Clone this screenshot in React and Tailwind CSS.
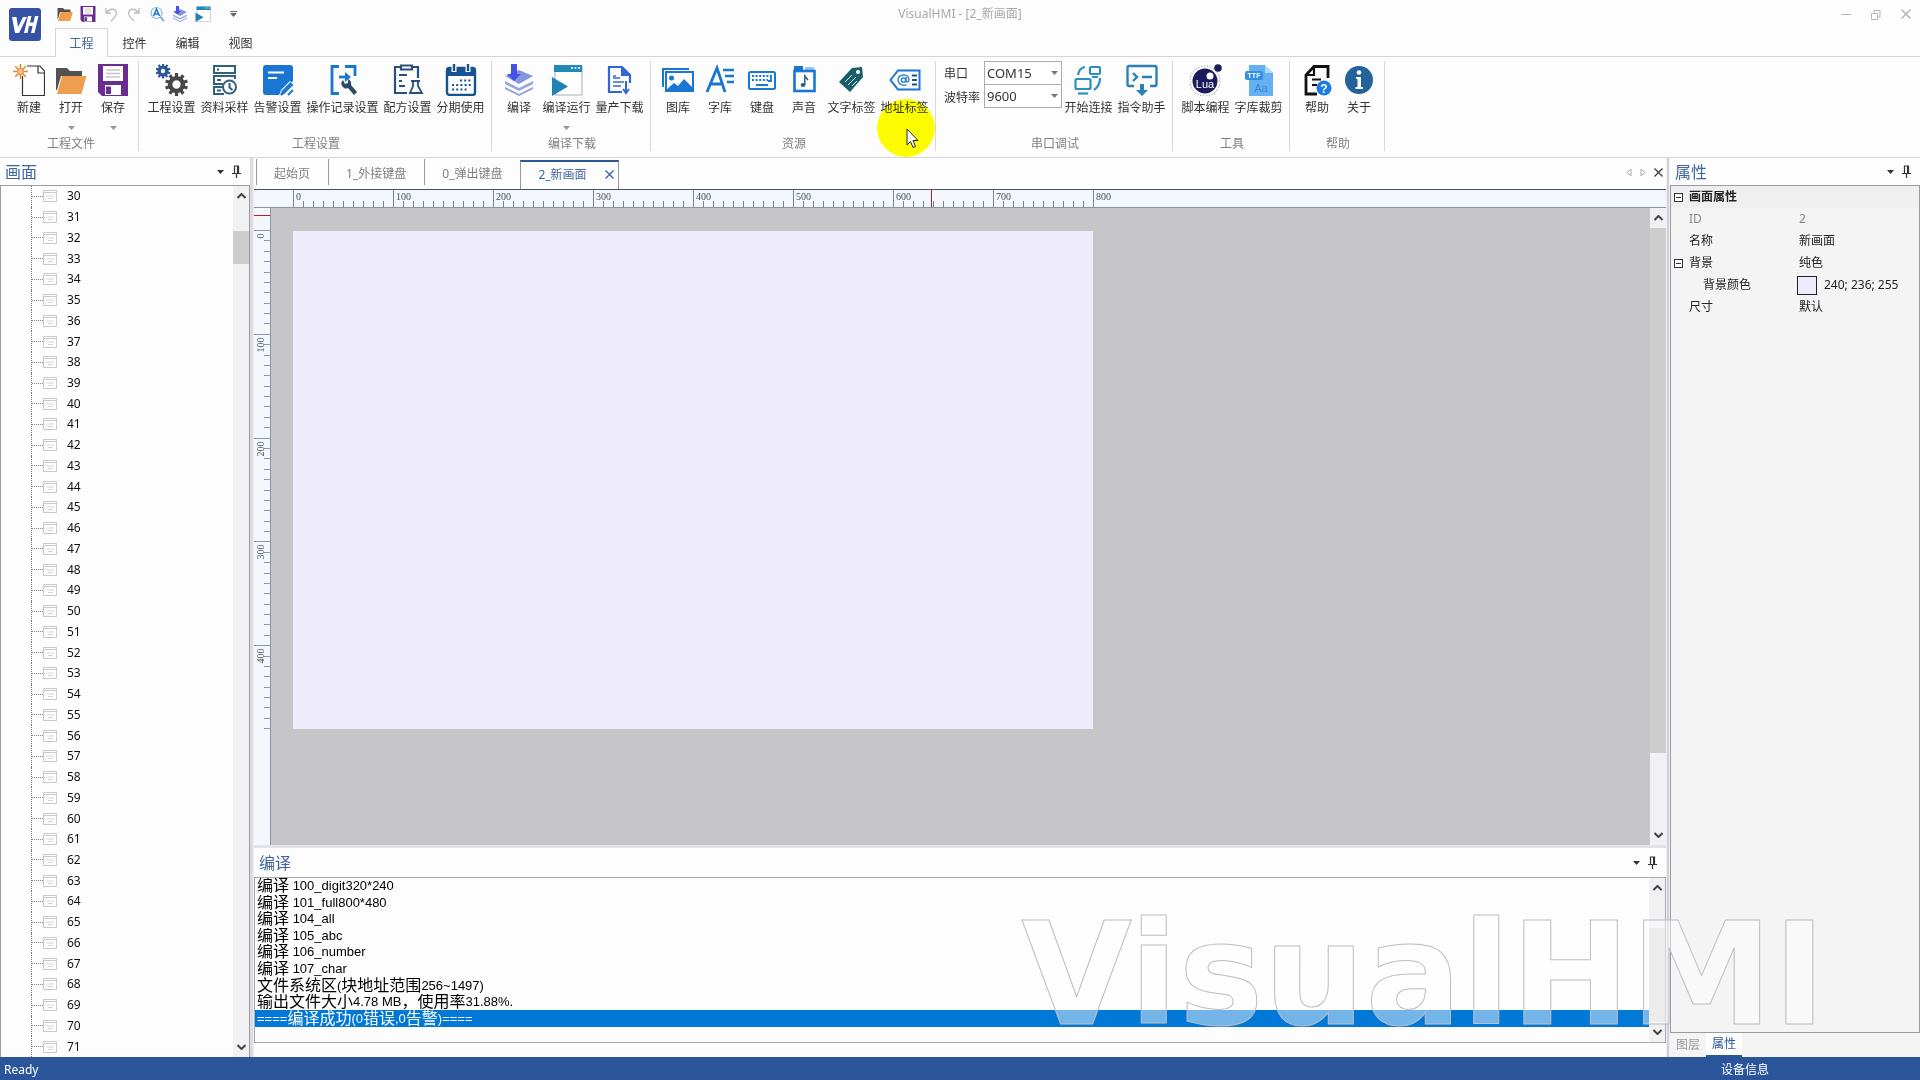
import React, { useState } from 'react';

const BLUE = '#1976d2';
const NAVY = '#2b4f7d';

/* ---------- toolbar drawings ---------- */

function Svg({ children, size = 32, box = 32 }) {
  return (
    <svg width={size} height={size} viewBox={`0 0 ${box} ${box}`} fill="none" aria-hidden="true">
      {children}
    </svg>
  );
}

const NewIcon = () => (
  <Svg>
    <path d="M14 2H27L31.500 7V31.500H9.500V12" fill="#fff" stroke="#333" strokeWidth="1.200" />
    <path d="M25 2V9H31.500" stroke="#333" strokeWidth="1.200" />
    <g stroke="#dc8a35" strokeWidth="1.600">
      <path d="M7.500 0V15M0 7.500H15M2.200 2.200L12.800 12.800M12.800 2.200L2.200 12.800" />
    </g>
    <circle cx="7.500" cy="7.500" r="3" fill="#f6c188" stroke="#dc8a35" />
  </Svg>
);

const OpenIcon = ({ size }) => (
  <Svg size={size}>
    <path d="M1 4H12L15 7H27V12H6L2 26H1Z" fill="#555150" />
    <path d="M7 12H31.500L26.500 30H2Z" fill="#ef9d4f" />
  </Svg>
);

const SaveIcon = ({ size }) => (
  <Svg size={size}>
    <path d="M1 0H31V32H5L1 28Z" fill="#6b2c91" />
    <path d="M6 2H26V17H6Z" fill="#fff" />
    <path d="M8 21H24V31H8Z" fill="#fff" />
    <path d="M9 6H23M9 9.500H23M9 13H23" stroke="#c4c4cc" strokeWidth="1.400" />
    <path d="M9 22.500H14V30H9Z" fill="#6b2c91" />
  </Svg>
);

function Gear({ cx, cy, r, color, hole }) {
  const teeth = [0, 36, 72, 108, 144, 180, 216, 252, 288, 324];
  return (
    <g transform={`translate(${cx} ${cy})`}>
      {teeth.map(a => (
        <rect key={a} x={-r * 0.14} y={-r} width={r * 0.28} height={r * 0.5} fill={color} transform={`rotate(${a})`} />
      ))}
      <circle r={(r * 0.72 + hole) / 2} stroke={color} strokeWidth={r * 0.78 - hole} />
    </g>
  );
}

const GearsIcon = () => (
  <Svg>
    <Gear cx={7} cy={7} r={7.5} color="#2b5797" hole={2.4} />
    <Gear cx={20.500} cy={20.500} r={11.500} color="#474747" hole={4.500} />
  </Svg>
);

const SampleIcon = () => (
  <Svg>
    <g stroke="#33617a" strokeWidth="2">
      <path d="M5 2H26V9H5ZM26 15V12H5V20H14M14 23H5V30H15" />
      <path d="M8 5.500H10M8 16H12M8 26.500H12" />
      <circle cx="20.500" cy="23" r="6.500" />
      <path d="M20.500 19V23.500L23.500 26" />
    </g>
  </Svg>
);

const AlarmIcon = () => (
  <Svg>
    <path d="M4 1H28Q31 1 31 4V17L17 31H4Q1 31 1 28V4Q1 1 4 1Z" fill={BLUE} />
    <path d="M6 8.500H22M6 14H15" stroke="#fff" strokeWidth="2" />
    <path d="M17 32L19 26L28 17L32 21L22 31Z" fill="#fff" />
    <path d="M19 31L21 27L28.500 19.500L30 21L22.500 28.500ZM26 31L31 26" stroke={BLUE} strokeWidth="2" />
  </Svg>
);

const RecordIcon = () => (
  <Svg>
    <g stroke={BLUE} strokeWidth="2.800">
      <path d="M12 2.500H5V29.500H12M18 2.500H28V12" />
      <path d="M12 13H20" />
    </g>
    <path d="M18 8L24 13L18 18Z" fill={BLUE} />
    <path d="M16 16Q12 20 17 24Q19 25 21 24L27 31L30 28L24 21Q25 17 21 15V19L18 20Z" fill="#2c4a63" />
  </Svg>
);

const RecipeIcon = () => (
  <Svg>
    <g stroke={NAVY} strokeWidth="2.200">
      <path d="M9 3H3V29H15M20 3H26V14" />
      <path d="M9 1.500H20V5.500H9Z" />
      <path d="M7 11H15M7 17H10M7 22H13" />
      <path d="M19 17H28M21 17V22L18 29H30L26 22V17" strokeWidth="1.800" />
    </g>
  </Svg>
);

const CalendarIcon = () => (
  <Svg>
    <rect x="2" y="4" width="28" height="27" rx="2.500" fill="#fff" stroke="#17538f" strokeWidth="2.400" />
    <path d="M2 4H30V12H2Z" fill="#17538f" />
    <path d="M9 0V8M23 0V8" stroke="#fff" strokeWidth="5" />
    <path d="M9 0V7M23 0V7" stroke="#17538f" strokeWidth="2.400" />
    <path d="M15 16.500H26M7 21H26M7 25.500H22" stroke="#17538f" strokeWidth="2" strokeDasharray="2 2.200" />
  </Svg>
);

const CompileIcon = ({ size }) => (
  <Svg size={size}>
    <path d="M2 23L16 30L30 23V25L16 32L2 25Z" fill="#8fa0d8" />
    <path d="M2 17L16 24L30 17V20L16 27L2 20Z" fill="#97a8e0" />
    <path d="M2 12L16 6L30 12L16 20Z" fill="#8497dc" />
    <path d="M8 0H14V10H18L11 17L4 10H8Z" fill="#4453e6" />
  </Svg>
);

const RunIcon = ({ size }) => (
  <Svg size={size}>
    <path d="M4 2H31V31H4Z" fill="#fff" stroke="#a9aeb5" />
    <path d="M3 1H31V8H3Z" fill="#2189b8" />
    <path d="M20 4H30" stroke="#fff" strokeWidth="1.500" strokeDasharray="2 1.500" />
    <path d="M1 13L17 22.500L1 32Z" fill="#1f82b5" />
  </Svg>
);

const BatchIcon = () => (
  <Svg>
    <path d="M18 28H5V3H18L26 11V19" stroke="#3465d8" strokeWidth="2.200" />
    <path d="M17 2L27 12H17Z" fill="#3465d8" />
    <path d="M9 14H16M9 18H20M9 22H17M9 12H12" stroke="#3465d8" strokeWidth="1.600" />
    <path d="M22 17V29M19 25L22 29L25 25" stroke="#3465d8" strokeWidth="2" />
  </Svg>
);

const ImageIcon = () => (
  <Svg>
    <path d="M1 23V5H27" stroke={BLUE} strokeWidth="2" />
    <rect x="4" y="8" width="27" height="19" stroke={BLUE} strokeWidth="2" />
    <circle cx="9.500" cy="14" r="2.500" fill={BLUE} />
    <path d="M4 26L12 19L16 22L22 15L30 23V27H4Z" fill={BLUE} />
  </Svg>
);

const FontIcon = () => (
  <Svg>
    <path d="M3 28L13 4L21 28M6.500 20H18" stroke={BLUE} strokeWidth="2.800" />
    <path d="M19 6H30M21 12H30M23 18H30" stroke={BLUE} strokeWidth="2.600" />
  </Svg>
);

const KeyboardIcon = () => (
  <Svg>
    <rect x="3" y="8" width="26" height="17" rx="1.500" stroke={BLUE} strokeWidth="2" />
    <path d="M6 12H26M6 16H22M10 21H22" stroke={BLUE} strokeWidth="1.800" strokeDasharray="2 1.600" />
    <path d="M11 21H21M25 13V17H22" stroke={BLUE} strokeWidth="1.800" />
  </Svg>
);

const SoundIcon = () => (
  <Svg>
    <path d="M6 2H15V6H6Z" fill={BLUE} />
    <path d="M17 3H26V8H17Z" fill="#9cc4ef" />
    <rect x="6.500" y="7" width="20" height="20" stroke={BLUE} strokeWidth="2.600" />
    <ellipse cx="15" cy="21" rx="2.400" ry="1.900" fill="#33617a" />
    <path d="M16.800 21V12L20 16" stroke="#33617a" strokeWidth="1.500" />
  </Svg>
);

const TagIcon = () => (
  <Svg>
    <path d="M3 18L16 4L26 3L27 13L14 28Z" fill="#175f69" />
    <circle cx="22" cy="8" r="2" fill="#fff" />
    <path d="M9 18L16 11M12 21L20 13M16 22L21 17" stroke="#fff" strokeWidth="0.900" />
  </Svg>
);

const AddressIcon = () => (
  <Svg>
    <path d="M1.500 16L9 6.500H30.500V25.500H9Z" stroke={BLUE} strokeWidth="2" />
    <circle cx="14.500" cy="16" r="2.200" stroke={BLUE} strokeWidth="1.300" />
    <path d="M17 13V17.500Q19.500 19 20 15.500Q19.500 11 14.500 10.800Q9 11.500 9 16Q9.500 21 14.500 21.200H17.500" stroke={BLUE} strokeWidth="1.300" />
    <path d="M23 11.500H28M23 16H28M23 20.500H28" stroke="#175f69" strokeWidth="2" />
  </Svg>
);

const ConnectIcon = () => (
  <Svg>
    <g stroke="#2d8fc0" strokeWidth="2.200">
      <rect x="2.500" y="15" width="15" height="10" rx="1.500" />
      <path d="M5 29.500H15" />
      <rect x="17" y="3" width="10" height="7" rx="1" />
      <path d="M19 13H25M5 11Q6 4 12 3M27 14Q27 22 21 26" />
    </g>
  </Svg>
);

const CommandIcon = () => (
  <Svg>
    <path d="M8 22H3Q1.500 22 1.500 20V4Q1.500 2 3 2H29Q30.500 2 30.500 4V20Q30.500 22 29 22H24" stroke="#2d80b5" strokeWidth="2.400" />
    <path d="M7 9L11 13L7 17M16 13H26" stroke="#2d80b5" strokeWidth="2.400" />
    <path d="M14 20H18V26H22L16 32L10 26H14Z" fill="#2d80b5" />
  </Svg>
);

const LuaIcon = () => (
  <Svg>
    <circle cx="15" cy="17" r="15" stroke="#9a9aa5" strokeWidth="1" strokeDasharray="1.500 1.500" />
    <circle cx="15" cy="17" r="12.500" fill="#1c1c5c" />
    <circle cx="20" cy="12" r="3.500" fill="#fff" />
    <circle cx="28" cy="4" r="3.800" fill="#1c1c5c" />
    <text x="15" y="24" fontSize="11" fill="#fff" textAnchor="middle" fontFamily="Liberation Sans">Lua</text>
  </Svg>
);

const TtfIcon = () => (
  <Svg>
    <path d="M6 1H22L30 9V32H6Z" fill="#64b0f3" />
    <path d="M22 1L30 9H22Z" fill="#b4dbfb" />
    <rect x="2" y="7" width="18" height="9" rx="2" fill="#358fe0" />
    <text x="11" y="14" fontSize="7" fontWeight="700" fill="#fff" textAnchor="middle" fontFamily="Liberation Sans">TTF</text>
    <text x="18" y="28" fontSize="11" fill="#3b87cc" textAnchor="middle" fontFamily="Liberation Sans">Aa</text>
  </Svg>
);

const HelpIcon = () => (
  <Svg>
    <path d="M16 30H5V11L13 2.500H27V14" stroke="#111" strokeWidth="2.800" />
    <path d="M13 3V11H5M11 15.500H20M11 21H16" stroke="#111" strokeWidth="2.200" />
    <circle cx="23" cy="24" r="7.500" fill="#1a7ce0" />
    <text x="23" y="28.500" fontSize="12" fontWeight="700" fill="#fff" textAnchor="middle" fontFamily="Liberation Sans">?</text>
  </Svg>
);

const AboutIcon = () => (
  <Svg>
    <circle cx="16" cy="16" r="14" fill="#24639a" />
    <circle cx="16" cy="8.500" r="2.300" fill="#fff" />
    <path d="M13 13H18V23H20V25H12.500V23H14.500V15H13Z" fill="#fff" />
  </Svg>
);

const UndoIcon = () => (
  <Svg size={16} box={16}>
    <path d="M3 2V7H8M3 7Q8 1 12.500 4.500Q15 8 11 12L8 15" stroke="#bcbcc2" strokeWidth="1.300" />
  </Svg>
);

const RedoIcon = () => (
  <Svg size={16} box={16}>
    <path d="M13 2V7H8M13 7Q8 1 3.500 4.500Q1 8 5 12L8 15" stroke="#bcbcc2" strokeWidth="1.300" />
  </Svg>
);

const FindIcon = () => (
  <Svg size={16} box={16}>
    <circle cx="7.500" cy="7" r="5.500" stroke="#8cbbe6" strokeWidth="1.200" />
    <path d="M4.500 10L7.500 3L10.500 10M5.500 8H9.500" stroke={BLUE} strokeWidth="1.500" />
    <path d="M11.500 11L15 15" stroke="#7da0c0" strokeWidth="1.800" />
  </Svg>
);

/* ---------- small shared parts ---------- */

const Triangle = () => (
  <svg width="7" height="4" viewBox="0 0 7 4" aria-hidden="true"><path d="M0 0H7L3.500 4Z" fill="currentColor" /></svg>
);

const Pin = () => (
  <svg width="9" height="13" viewBox="0 0 9 13" fill="none" aria-hidden="true">
    <path d="M2.500 8V1H6.500V8M0 8.500H9M4.500 9V13" stroke="#333" strokeWidth="1.200" />
    <path d="M5 1H7V8H5Z" fill="#333" />
  </svg>
);

const Cross = ({ size = 9 }) => (
  <svg width={size} height={size} viewBox="0 0 9 9" fill="none" aria-hidden="true">
    <path d="M0.500 0.500L8.500 8.500M8.500 0.500L0.500 8.500" stroke="currentColor" strokeWidth="1.400" />
  </svg>
);

function PanelHeader({ title }) {
  return (
    <div className="flex h-[27px] shrink-0 items-center pl-[5px] pr-[9px]">
      <h2 className="flex-1 text-base leading-5 text-[#40659f]">{title}</h2>
      <button className="mr-2 text-[#333]" aria-label="选项"><Triangle /></button>
      <button aria-label="固定"><Pin /></button>
    </div>
  );
}

function ScrollBar({ top, height, thumb = 'bg-[#cdcdcd]' }) {
  return (
    <div className="flex w-4 shrink-0 flex-col bg-[#f1f1f3] text-[#444]">
      <button className="flex h-5 items-center justify-center" aria-label="向上">
        <svg width="9" height="6" viewBox="0 0 9 6" fill="none"><path d="M0.500 5L4.500 1L8.500 5" stroke="currentColor" strokeWidth="2" /></svg>
      </button>
      <div className="relative flex-1">
        <div className={`absolute inset-x-0 ${thumb}`} style={{ top: `${top}%`, height: `${height}%` }} />
      </div>
      <button className="flex h-5 items-center justify-center" aria-label="向下">
        <svg width="9" height="6" viewBox="0 0 9 6" fill="none"><path d="M0.500 1L4.500 5L8.500 1" stroke="currentColor" strokeWidth="2" /></svg>
      </button>
    </div>
  );
}

/* ---------- title bar ---------- */

const menus = ['工程', '控件', '编辑', '视图'];

function TitleBar() {
  const [menu, setMenu] = useState('工程');

  return (
    <header className="grid shrink-0 grid-cols-[1fr_auto_1fr] border-b border-[#d5d5d8]">
      <div className="flex">
        <div className="w-[55px] shrink-0 pl-[9px] pt-2">
          <svg width="32" height="33" viewBox="0 0 32 33" aria-label="VisualHMI">
            <rect width="32" height="33" rx="3" fill="#3552a4" />
            <path d="M3 9H7.500L9 19L14 9H18L10 25H6Z" fill="#fff" />
            <path d="M19 8H22.500L21 14.500H24.500L26 8H29.500L25.500 25H22L23.600 18H20L18.500 25H15Z" fill="#fff" />
          </svg>
        </div>
        <div>
          <div className="flex h-7 items-center gap-[7px] pl-[2px]">
            <button aria-label="打开"><OpenIcon size={16} /></button>
            <button aria-label="保存"><SaveIcon size={16} /></button>
            <button aria-label="撤销"><UndoIcon /></button>
            <button aria-label="重做"><RedoIcon /></button>
            <button aria-label="查找"><FindIcon /></button>
            <button aria-label="编译"><CompileIcon size={16} /></button>
            <button aria-label="编译运行"><RunIcon size={16} /></button>
            <button className="ml-3 border-t border-[#666] pt-px text-[#666]" aria-label="自定义"><Triangle /></button>
          </div>
          <nav className="-mb-px flex">
            {menus.map(name => (
              <button
                key={name}
                onClick={() => setMenu(name)}
                className={`h-[29px] w-[53px] border border-b-0 pt-[2px] ${
                  menu === name ? 'border-[#d5d5d8] bg-[#fdfdfe] text-[#40659f]' : 'border-transparent'
                }`}
              >
                {name}
              </button>
            ))}
          </nav>
        </div>
      </div>
      <h1 className="pt-[6px] leading-4 text-[#a8a8a8]">VisualHMI - [2_新画面]</h1>
      <div className="flex h-7 items-center justify-end gap-5 pr-[9px] text-[#b5b5b5]">
        <button aria-label="最小化"><span className="block h-px w-[10px] bg-[#b5b5b5]" /></button>
        <button aria-label="还原">
          <svg width="10" height="11" viewBox="0 0 10 11" fill="none"><path d="M0.500 4.500H6.500V10.500H0.500ZM3 4V1.500H9V8H7" stroke="currentColor" /></svg>
        </button>
        <button aria-label="关闭"><Cross size={10} /></button>
      </div>
    </header>
  );
}

/* ---------- ribbon ---------- */

function Tool({ icon, label, menu }) {
  return (
    <button className={`flex flex-col items-center whitespace-nowrap pt-[3px] ${
      label.length > 4 ? 'w-[77px]' : label.length > 2 ? 'w-[53px]' : 'w-[42px]'
    }`}>
      {icon}
      <span className="mt-1 leading-4">{label}</span>
      <span className="mt-1 flex h-4 items-center text-[#999]">{menu && <Triangle />}</span>
    </button>
  );
}

function Group({ title, children }) {
  return (
    <section className="border-r border-[#d8d8dc] pl-[6px] pr-1 first:pl-2">
      <div className="flex">{children}</div>
      <h3 className="mt-px text-center leading-[14px] text-[#808080]">{title}</h3>
    </section>
  );
}

function Combo({ id, options }) {
  return (
    <div className="relative -mt-px flex items-center first:mt-0">
      <select id={id} className="h-6 w-[78px] appearance-none border border-[#ababab] bg-white pl-[2px] text-[13px] leading-4">
        {options.map(o => <option key={o}>{o}</option>)}
      </select>
      <span className="pointer-events-none absolute right-1 text-[#777]"><Triangle /></span>
    </div>
  );
}

function Ribbon() {
  return (
    <div className="relative flex shrink-0 border-b border-[#d5d5d8] pb-[6px] pt-1">
      <Group title="工程文件">
        <Tool icon={<NewIcon />} label="新建" />
        <Tool icon={<OpenIcon />} label="打开" menu />
        <Tool icon={<SaveIcon />} label="保存" menu />
      </Group>
      <Group title="工程设置">
        <Tool icon={<GearsIcon />} label="工程设置" />
        <Tool icon={<SampleIcon />} label="资料采样" />
        <Tool icon={<AlarmIcon />} label="告警设置" />
        <Tool icon={<RecordIcon />} label="操作记录设置" />
        <Tool icon={<RecipeIcon />} label="配方设置" />
        <Tool icon={<CalendarIcon />} label="分期使用" />
      </Group>
      <Group title="编译下载">
        <Tool icon={<CompileIcon />} label="编译" />
        <Tool icon={<RunIcon />} label="编译运行" menu />
        <Tool icon={<BatchIcon />} label="量产下载" />
      </Group>
      <Group title="资源">
        <Tool icon={<ImageIcon />} label="图库" />
        <Tool icon={<FontIcon />} label="字库" />
        <Tool icon={<KeyboardIcon />} label="键盘" />
        <Tool icon={<SoundIcon />} label="声音" />
        <Tool icon={<TagIcon />} label="文字标签" />
        <Tool icon={<AddressIcon />} label="地址标签" />
      </Group>
      <Group title="串口调试">
        <div className="flex flex-col pl-[2px] pt-px">
          <label htmlFor="port" className="h-6 w-10 leading-[23px]">串口</label>
          <label htmlFor="baud" className="h-6 w-10 leading-[23px]">波特率</label>
        </div>
        <div className="flex flex-col">
          <Combo id="port" options={['COM15', 'COM1']} />
          <Combo id="baud" options={['9600', '115200']} />
        </div>
        <Tool icon={<ConnectIcon />} label="开始连接" />
        <Tool icon={<CommandIcon />} label="指令助手" />
      </Group>
      <Group title="工具">
        <Tool icon={<LuaIcon />} label="脚本编程" />
        <Tool icon={<TtfIcon />} label="字库裁剪" />
      </Group>
      <Group title="帮助">
        <Tool icon={<HelpIcon />} label="帮助" />
        <Tool icon={<AboutIcon />} label="关于" />
      </Group>

      {/* Pointer with highlight */}
      <div className="pointer-events-none absolute left-[877px] top-[42px] size-[58px] rounded-full bg-[#ffff00] mix-blend-multiply" />
      <svg className="pointer-events-none absolute left-[906px] top-[71px]" width="13" height="21" viewBox="0 0 13 21">
        <path d="M1 1V17L4.500 13.500L7 19.500L9.500 18.500L7 12.500H12Z" fill="#fff" stroke="#222" />
      </svg>
    </div>
  );
}

/* ---------- screen tree ---------- */

const screens = Array.from({ length: 42 }, (_, i) => i + 30);

function ScreenTree() {
  return (
    <aside className="flex w-[250px] shrink-0 flex-col">
      <PanelHeader title="画面" />
      <div className="flex min-h-0 flex-1 border border-b-0 border-[#9c9ca0]">
        <ul className="grid flex-1 auto-rows-fr">
          {screens.map(n => (
            <li key={n} className="ml-[30px] flex items-center border-l border-dotted border-[#777]">
              <span className="w-[11px] border-t border-dotted border-[#888]" />
              <svg width="14" height="12" viewBox="0 0 14 12" fill="none" aria-hidden="true">
                <path d="M0.500 0.500H13.500V11.500H0.500ZM0.500 2.500H13.500" stroke="#c9c9c9" />
                <path d="M4 6H11M5 8.500H10" stroke="#d5d5d5" />
              </svg>
              <span className="ml-[10px] leading-4 text-[#111]">{n}</span>
            </li>
          ))}
        </ul>
        <ScrollBar top={3} height={4} />
      </div>
    </aside>
  );
}

/* ---------- editor ---------- */

const tabs = ['起始页', '1_外接键盘', '0_弹出键盘'];

function EditorTabs() {
  return (
    <div className="flex h-8 shrink-0 items-end border-b border-[#44566a] pl-[2px] text-[#808080]">
      {tabs.map(t => (
        <button key={t} className="mb-1 h-[26px] border-l border-[#9a9a9e] pl-[17px] pr-[18px] pt-[3px]">
          {t}
        </button>
      ))}
      <div className="flex h-[29px] items-center border-x border-t-2 border-x-[#9a9a9e] border-t-[#2b5797] pb-[2px] pl-[17px] pr-1 text-[#40659f]">
        <button>2_新画面</button>
        <button className="ml-[18px]" aria-label="关闭"><Cross /></button>
      </div>
      <div className="mb-3 ml-auto flex items-center gap-2 pr-[3px]">
        <button aria-label="向左"><svg width="6" height="9" viewBox="0 0 6 9" fill="none"><path d="M5 1V8L1 4.500Z" stroke="#aaa" /></svg></button>
        <button aria-label="向右"><svg width="6" height="9" viewBox="0 0 6 9" fill="none"><path d="M1 1V8L5 4.500Z" stroke="#aaa" /></svg></button>
        <button className="text-[#444]" aria-label="关闭"><Cross /></button>
      </div>
    </div>
  );
}

const hTicks = Array.from({ length: 81 }, (_, i) => i);
const vTicks = Array.from({ length: 49 }, (_, i) => i);

function HorizontalRuler() {
  return (
    <svg className="block h-[17px] w-full" aria-hidden="true">
      {hTicks.map(i => (
        <path key={i} d={`M${39.5 + i * 10} ${i % 10 ? 11 : 0}V17`} stroke="#7a8494" />
      ))}
      {hTicks.filter(i => i % 10 === 0).map(i => (
        <text key={i} x={42 + i * 10} y="10" fontSize="10" fill="#4a5260" fontFamily="Liberation Serif">{i * 10}</text>
      ))}
      <path d="M677.500 0V17" stroke="#c0142c" />
    </svg>
  );
}

function VerticalRuler() {
  const y = i => Math.round(22 + i * 10.38) + 0.5;
  return (
    <svg className="h-full w-4 shrink-0" aria-hidden="true">
      {vTicks.map(i => (
        <path key={i} d={`M${i % 10 ? 10 : 0} ${y(i)}H16`} stroke="#8d96aa" />
      ))}
      {vTicks.filter(i => i % 10 === 0).map(i => (
        <text key={i} transform={`translate(10 ${y(i) + 3}) rotate(-90)`} textAnchor="end" fontSize="10" fill="#4a5260" fontFamily="Liberation Serif">
          {i * 10}
        </text>
      ))}
      <path d="M0 7.500H16" stroke="#c0142c" />
    </svg>
  );
}

function Editor() {
  return (
    <section className="flex min-h-0 flex-1 flex-col">
      <EditorTabs />
      <div className="shrink-0 border-b border-[#8795a8] bg-[#f3f6fb]">
        <HorizontalRuler />
      </div>
      <div className="flex min-h-0 flex-1">
        <div className="border-r border-[#8795a8] bg-[#f3f6fb]"><VerticalRuler /></div>
        <div className="min-w-0 flex-1 overflow-hidden bg-[#c6c6c8] pl-[22px] pt-[23px]">
          <div className="h-[498px] w-[800px] bg-[#eeebfd]" />
        </div>
        <ScrollBar top={0} height={88} />
      </div>
    </section>
  );
}

/* ---------- build output ---------- */

const logLines = [
  '编译 100_digit320*240',
  '编译 101_full800*480',
  '编译 104_all',
  '编译 105_abc',
  '编译 106_number',
  '编译 107_char',
  '文件系统区(块地址范围256~1497)',
  '输出文件大小4.78 MB，使用率31.88%.',
  '====编译成功(0错误,0告警)====',
];

// Chinese runs are set larger than the latin ones
function LogText({ text }) {
  return text.split(/([\u4e00-\u9fff，]+)/).map((part, i) => (
    <span key={i} className={i % 2 ? 'text-base leading-4' : 'text-[13px] leading-4'}>{part}</span>
  ));
}

function BuildLog() {
  return (
    <section className="shrink-0 border-t-[3px] border-[#e2e2e6] pb-[14px] pt-px">
      <PanelHeader title="编译" />
      <div className="mt-px flex h-[166px] border border-[#a9a9ae]">
        <ol className="mb-[15px] grid flex-1 grid-rows-9 whitespace-pre font-['Liberation_Sans','Noto_Sans_CJK_SC',sans-serif] text-black">
          {logLines.map((line, i) => (
            <li key={i} className={`flex items-center overflow-hidden pl-[2px] ${i === 8 ? 'bg-[#0078d7] text-white' : ''}`}>
              <LogText text={line} />
            </li>
          ))}
        </ol>
        <ScrollBar top={24} height={76} thumb="bg-[#dcdcde]" />
      </div>
    </section>
  );
}

/* ---------- properties ---------- */

const Toggle = () => (
  <button className="flex size-[9px] items-center justify-center border border-[#333] bg-white" aria-label="折叠">
    <span className="h-px w-[5px] bg-[#333]" />
  </button>
);

function Row({ name, value, toggle, nested, muted }) {
  return (
    <tr className={`h-[22px] ${muted ? 'text-[#888]' : ''}`}>
      <td className="w-[18px] pl-[3px]">{toggle && <Toggle />}</td>
      <td className={`w-[110px] ${nested ? 'pl-[14px]' : ''}`}>{name}</td>
      <td>{value}</td>
    </tr>
  );
}

function Properties() {
  return (
    <aside className="flex w-[250px] shrink-0 flex-col">
      <PanelHeader title="属性" />
      <div className="flex-1 border border-[#9c9ca0] bg-[#f4f4f5]">
        <table className="w-full table-fixed text-left leading-4 text-[#222]">
          <tbody>
            <tr className="h-[22px] bg-[#efeff0]">
              <td className="w-[18px] pl-[3px]"><Toggle /></td>
              <th className="w-[110px] font-bold">画面属性</th>
              <td />
            </tr>
            <Row name="ID" value="2" muted />
            <Row name="名称" value="新画面" />
            <Row name="背景" value="纯色" toggle />
            <Row
              name="背景颜色"
              nested
              value={
                <span className="-ml-[2px] flex items-center gap-[7px]">
                  <span className="h-[19px] w-5 border border-[#222] bg-[#eeebfd]" />
                  240; 236; 255
                </span>
              }
            />
            <Row name="尺寸" value="默认" />
          </tbody>
        </table>
      </div>
      <div className="flex h-6 shrink-0 bg-[#f4f4f5]">
        <button className="w-9 text-[#999]">图层</button>
        <button className="w-9 border-b-2 border-[#2b5797] bg-[#fdfdfe] text-[#2b5797]">属性</button>
      </div>
    </aside>
  );
}

function App() {
  return (
    <div className="relative flex h-screen flex-col overflow-hidden bg-[#fdfdfe] font-['Noto_Sans','Noto_Sans_CJK_SC',sans-serif] text-xs text-[#333]">
      <TitleBar />
      <Ribbon />
      <div className="flex min-h-0 flex-1">
        <ScreenTree />
        <div className="w-1 shrink-0 border-r border-[#f0f0f2] bg-[#dcdce0]" />
        <main className="flex min-w-0 flex-1 flex-col">
          <Editor />
          <BuildLog />
        </main>
        <div className="w-1 shrink-0 border-x border-[#f0f0f2] bg-[#d0d0d6]" />
        <Properties />
      </div>
      <footer className="flex h-[23px] shrink-0 items-center justify-between bg-[#2a559b] pl-1 pr-[151px] pt-[2px] text-white">
        <span>Ready</span>
        <span>设备信息</span>
      </footer>

      {/* Watermark */}
      <div className="pointer-events-none absolute bottom-[50px] right-[94px] font-['DejaVu_Sans'] text-[143px] font-bold leading-[110px] text-white/45 [-webkit-text-stroke:1px_#bdbdc6]">
        VisualHMI
      </div>
    </div>
  );
}

export default App;
